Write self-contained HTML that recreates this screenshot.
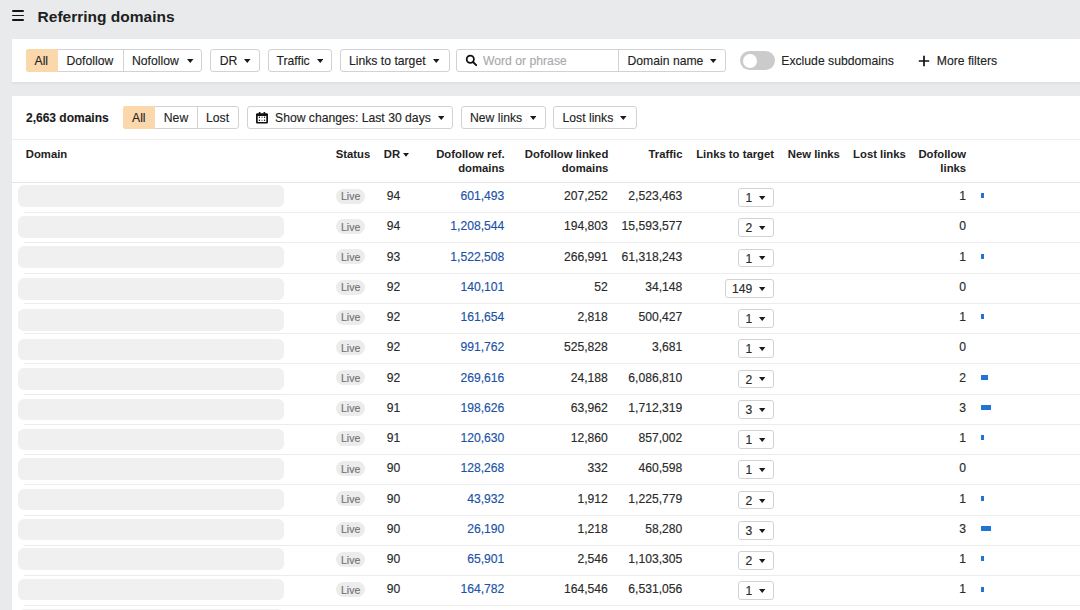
<!DOCTYPE html><html><head><meta charset="utf-8"><style>
*{box-sizing:border-box;margin:0;padding:0}
html,body{width:1080px;height:610px;overflow:hidden;background:#e9eaec;font-family:"Liberation Sans", sans-serif;color:#222}
.a{position:absolute;white-space:nowrap}
.btn{position:absolute;border:1px solid #d2d2d4;background:#fff;border-radius:3px;font-size:12.2px;color:#222}
.t{position:absolute;white-space:nowrap;line-height:1;-webkit-text-stroke:0.12px currentColor}
.panel{position:absolute;left:12px;right:0;background:#fff}
.h{font-weight:bold;font-size:11.3px;color:#222;line-height:13.4px;-webkit-text-stroke:0}
.r{text-align:right}
.num{font-size:12.15px;color:#2a2a2a;-webkit-text-stroke:0.15px currentColor}
.lnk{color:#1a52a6}
.line{position:absolute;left:12px;right:0;height:1px;background:#ececec}
</style></head><body><div class="a" style="left:12px;top:10.3px;width:12px;height:1.8px;background:#141414;border-radius:1px"></div>
<div class="a" style="left:12px;top:14.6px;width:12px;height:1.8px;background:#141414;border-radius:1px"></div>
<div class="a" style="left:12px;top:19px;width:12px;height:1.8px;background:#141414;border-radius:1px"></div>
<div class="t" style="left:37.6px;top:8.7px;font-weight:bold;font-size:15.5px;color:#202020;-webkit-text-stroke:0">Referring domains</div>
<div class="panel" style="top:39px;height:44px;border-bottom:1px solid #dedfe1;box-shadow:0 1px 1.5px rgba(0,0,0,0.035)"></div>
<div class="btn" style="left:26px;top:49px;width:176.4px;height:22.5px"></div>
<div class="a" style="left:26px;top:49px;width:31.5px;height:22.5px;background:#fad8ab;border-radius:3px 0 0 3px"></div>
<div class="a" style="left:123px;top:49px;width:1px;height:22.5px;background:#d2d2d4"></div>
<div class="t" style="left:34.5px;top:55.1px;font-size:12.2px">All</div>
<div class="t" style="left:66.5px;top:55.1px;font-size:12.2px">Dofollow</div>
<div class="t" style="left:132px;top:55.1px;font-size:12.2px">Nofollow</div>
<svg style="position:absolute;left:187px;top:58.800000000000004px" width="6.5" height="4" viewBox="0 0 6.5 4"><path d="M0 0H6.5L3.25 4Z" fill="#1a1a1a"/></svg>
<div class="btn" style="left:210.4px;top:49px;width:49.400000000000006px;height:22.5px;background:#fff"></div><div class="t" style="left:219.8px;top:55.1px;font-size:12.2px;color:#222">DR</div><svg style="position:absolute;left:244.0px;top:58.800000000000004px" width="6.5" height="4" viewBox="0 0 6.5 4"><path d="M0 0H6.5L3.25 4Z" fill="#1a1a1a"/></svg>
<div class="btn" style="left:267.5px;top:49px;width:64.89999999999998px;height:22.5px;background:#fff"></div><div class="t" style="left:276.5px;top:55.1px;font-size:12.2px;color:#222">Traffic</div><svg style="position:absolute;left:316.8px;top:58.800000000000004px" width="6.5" height="4" viewBox="0 0 6.5 4"><path d="M0 0H6.5L3.25 4Z" fill="#1a1a1a"/></svg>
<div class="btn" style="left:340px;top:49px;width:109.80000000000001px;height:22.5px;background:#fff"></div><div class="t" style="left:349px;top:55.1px;font-size:12.2px;color:#222">Links to target</div><svg style="position:absolute;left:433px;top:58.800000000000004px" width="6.5" height="4" viewBox="0 0 6.5 4"><path d="M0 0H6.5L3.25 4Z" fill="#1a1a1a"/></svg>
<div class="btn" style="left:456.3px;top:49px;width:270.09999999999997px;height:22.5px"></div>
<div class="a" style="left:618px;top:49px;width:1px;height:22.5px;background:#d2d2d4"></div>
<svg class="a" style="left:464px;top:53px" width="14" height="14" viewBox="0 0 14 14"><circle cx="6.3" cy="6.3" r="3.6" fill="none" stroke="#111" stroke-width="1.8"/><path d="M9 9L12.2 12.2" stroke="#111" stroke-width="1.9" stroke-linecap="round"/></svg>
<div class="t" style="left:483px;top:55.1px;font-size:12.2px;color:#a9a9a9">Word or phrase</div>
<div class="t" style="left:627.5px;top:55.1px;font-size:12.2px">Domain name</div>
<svg style="position:absolute;left:710.2px;top:58.800000000000004px" width="6.5" height="4" viewBox="0 0 6.5 4"><path d="M0 0H6.5L3.25 4Z" fill="#1a1a1a"/></svg>
<div class="a" style="left:740.4px;top:50.9px;width:34.3px;height:18.9px;border-radius:10px;background:#cbcbcb"></div>
<div class="a" style="left:742.5px;top:53.6px;width:14px;height:14px;border-radius:50%;background:#fff"></div>
<div class="t" style="left:781.3px;top:55.1px;font-size:12.2px">Exclude subdomains</div>
<svg class="a" style="left:918px;top:54.5px" width="12" height="12" viewBox="0 0 12 12"><path d="M6 0.8V11.2M0.8 6H11.2" stroke="#111" stroke-width="1.7"/></svg>
<div class="t" style="left:936.8px;top:55.1px;font-size:12.2px">More filters</div>
<div class="panel" style="top:96px;bottom:0"></div>
<div class="t" style="left:26px;top:112.39999999999999px;font-weight:bold;font-size:12px;color:#1a1a1a">2,663 domains</div>
<div class="btn" style="left:123.1px;top:106px;width:115.6px;height:22.5px"></div>
<div class="a" style="left:123.1px;top:106px;width:31.5px;height:22.5px;background:#fad8ab;border-radius:3px 0 0 3px"></div>
<div class="a" style="left:197px;top:106px;width:1px;height:22.5px;background:#d2d2d4"></div>
<div class="t" style="left:132px;top:112.1px;font-size:12.2px">All</div>
<div class="t" style="left:163.8px;top:112.1px;font-size:12.2px">New</div>
<div class="t" style="left:206px;top:112.1px;font-size:12.2px">Lost</div>
<div class="btn" style="left:246.7px;top:106px;width:206.40000000000003px;height:22.5px"></div>
<svg class="a" style="left:256px;top:111.5px" width="12" height="12" viewBox="0 0 12 12"><path fill-rule="evenodd" fill="#111" d="M1.2 1.2H10.8Q12 1.2 12 2.4V10.3Q12 11.5 10.8 11.5H1.2Q0 11.5 0 10.3V2.4Q0 1.2 1.2 1.2ZM1.7 4V9.9H10.3V4Z"/><rect x="2.8" y="0" width="1.7" height="2" rx="0.6" fill="#111"/><rect x="7.5" y="0" width="1.7" height="2" rx="0.6" fill="#111"/><circle cx="3.4" cy="5.3" r="0.7" fill="#111"/><circle cx="8.6" cy="5.3" r="0.7" fill="#111"/><circle cx="3.4" cy="8.3" r="0.7" fill="#111"/><circle cx="8.6" cy="8.3" r="0.7" fill="#111"/><rect x="5.2" y="4.7" width="1.6" height="1.1" fill="#888"/><rect x="5.2" y="7.8" width="1.6" height="1.1" fill="#888"/></svg>
<div class="t" style="left:275px;top:112.1px;font-size:12.2px">Show changes: Last 30 days</div>
<svg style="position:absolute;left:437.8px;top:115.8px" width="6.5" height="4" viewBox="0 0 6.5 4"><path d="M0 0H6.5L3.25 4Z" fill="#1a1a1a"/></svg>
<div class="btn" style="left:461.3px;top:106px;width:84.99999999999994px;height:22.5px;background:#fff"></div><div class="t" style="left:470px;top:112.1px;font-size:12.2px;color:#222">New links</div><svg style="position:absolute;left:529.5px;top:115.8px" width="6.5" height="4" viewBox="0 0 6.5 4"><path d="M0 0H6.5L3.25 4Z" fill="#1a1a1a"/></svg>
<div class="btn" style="left:553.3px;top:106px;width:83.40000000000009px;height:22.5px;background:#fff"></div><div class="t" style="left:562.5px;top:112.1px;font-size:12.2px;color:#222">Lost links</div><svg style="position:absolute;left:620px;top:115.8px" width="6.5" height="4" viewBox="0 0 6.5 4"><path d="M0 0H6.5L3.25 4Z" fill="#1a1a1a"/></svg>
<div class="line" style="top:139px"></div>
<div class="t h" style="left:25.8px;top:148.3px">Domain</div>
<div class="t h" style="left:335.7px;top:148.3px">Status</div>
<div class="t h" style="left:383.8px;top:148.3px">DR</div>
<svg style="position:absolute;left:403.3px;top:153.3px" width="6" height="3.8" viewBox="0 0 6 3.8"><path d="M0 0H6L3.0 3.8Z" fill="#1a1a1a"/></svg>
<div class="t h r" style="right:575.4px;top:148.3px">Dofollow ref.<br>domains</div>
<div class="t h r" style="right:471.70000000000005px;top:148.3px">Dofollow linked<br>domains</div>
<div class="t h r" style="right:397.5px;top:148.3px">Traffic</div>
<div class="t h" style="left:696.2px;top:148.3px">Links to target</div>
<div class="t h" style="left:787.8px;top:148.3px">New links</div>
<div class="t h" style="left:853.1px;top:148.3px">Lost links</div>
<div class="t h r" style="right:113.89999999999998px;top:148.3px">Dofollow<br>links</div>
<div class="line" style="top:181.8px;background:#e6e6e6"></div>
<div class="a" style="left:18.4px;top:184.9px;width:265.4px;height:21.8px;border-radius:6px;background:#f0f0f0"></div>
<div class="line" style="top:212.06px;left:24px"></div>
<div class="a" style="left:336px;top:188.8px;width:28.7px;height:15px;border-radius:8px;background:#ececec"></div>
<div class="t" style="left:341px;top:191.4px;font-size:10.5px;color:#727272;-webkit-text-stroke:0.15px currentColor">Live</div>
<div class="t num" style="left:386.7px;top:190.10000000000002px">94</div>
<div class="t num lnk r" style="right:575.7px;top:190.10000000000002px">601,493</div>
<div class="t num r" style="right:472.20000000000005px;top:190.10000000000002px">207,252</div>
<div class="t num r" style="right:397.70000000000005px;top:190.10000000000002px">2,523,463</div>
<div class="btn" style="left:737.8299999999999px;top:188.0px;width:35.97px;height:18.8px"></div>
<div class="t num" style="left:745.43px;top:192.0px">1</div>
<svg style="position:absolute;left:759.2999999999998px;top:195.9px" width="6.4" height="4" viewBox="0 0 6.4 4"><path d="M0 0H6.4L3.2 4Z" fill="#1a1a1a"/></svg>
<div class="t num r" style="right:114px;top:190.10000000000002px">1</div>
<div class="a" style="left:980.5px;top:193.3px;width:3.5px;height:5px;background:#1f74d6"></div>
<div class="a" style="left:18.4px;top:215.9px;width:265.4px;height:21.8px;border-radius:6px;background:#f0f0f0"></div>
<div class="line" style="top:242.32px;left:24px"></div>
<div class="a" style="left:336px;top:219.06px;width:28.7px;height:15px;border-radius:8px;background:#ececec"></div>
<div class="t" style="left:341px;top:221.66px;font-size:10.5px;color:#727272;-webkit-text-stroke:0.15px currentColor">Live</div>
<div class="t num" style="left:386.7px;top:220.36px">94</div>
<div class="t num lnk r" style="right:575.7px;top:220.36px">1,208,544</div>
<div class="t num r" style="right:472.20000000000005px;top:220.36px">194,803</div>
<div class="t num r" style="right:397.70000000000005px;top:220.36px">15,593,577</div>
<div class="btn" style="left:737.8299999999999px;top:218.26px;width:35.97px;height:18.8px"></div>
<div class="t num" style="left:745.43px;top:222.26px">2</div>
<svg style="position:absolute;left:759.2999999999998px;top:226.16px" width="6.4" height="4" viewBox="0 0 6.4 4"><path d="M0 0H6.4L3.2 4Z" fill="#1a1a1a"/></svg>
<div class="t num r" style="right:114px;top:220.36px">0</div>
<div class="a" style="left:18.4px;top:245.9px;width:265.4px;height:21.8px;border-radius:6px;background:#f0f0f0"></div>
<div class="line" style="top:272.58000000000004px;left:24px"></div>
<div class="a" style="left:336px;top:249.32000000000002px;width:28.7px;height:15px;border-radius:8px;background:#ececec"></div>
<div class="t" style="left:341px;top:251.92000000000002px;font-size:10.5px;color:#727272;-webkit-text-stroke:0.15px currentColor">Live</div>
<div class="t num" style="left:386.7px;top:250.62000000000003px">93</div>
<div class="t num lnk r" style="right:575.7px;top:250.62000000000003px">1,522,508</div>
<div class="t num r" style="right:472.20000000000005px;top:250.62000000000003px">266,991</div>
<div class="t num r" style="right:397.70000000000005px;top:250.62000000000003px">61,318,243</div>
<div class="btn" style="left:737.8299999999999px;top:248.52px;width:35.97px;height:18.8px"></div>
<div class="t num" style="left:745.43px;top:252.52px">1</div>
<svg style="position:absolute;left:759.2999999999998px;top:256.42px" width="6.4" height="4" viewBox="0 0 6.4 4"><path d="M0 0H6.4L3.2 4Z" fill="#1a1a1a"/></svg>
<div class="t num r" style="right:114px;top:250.62000000000003px">1</div>
<div class="a" style="left:980.5px;top:253.82000000000002px;width:3.5px;height:5px;background:#1f74d6"></div>
<div class="a" style="left:18.4px;top:277.8px;width:265.4px;height:21.8px;border-radius:6px;background:#f0f0f0"></div>
<div class="line" style="top:302.84000000000003px;left:24px"></div>
<div class="a" style="left:336px;top:279.58000000000004px;width:28.7px;height:15px;border-radius:8px;background:#ececec"></div>
<div class="t" style="left:341px;top:282.18000000000006px;font-size:10.5px;color:#727272;-webkit-text-stroke:0.15px currentColor">Live</div>
<div class="t num" style="left:386.7px;top:280.88000000000005px">92</div>
<div class="t num lnk r" style="right:575.7px;top:280.88000000000005px">140,101</div>
<div class="t num r" style="right:472.20000000000005px;top:280.88000000000005px">52</div>
<div class="t num r" style="right:397.70000000000005px;top:280.88000000000005px">34,148</div>
<div class="btn" style="left:724.5px;top:278.78000000000003px;width:49.3px;height:18.8px"></div>
<div class="t num" style="left:732.1px;top:282.78000000000003px">149</div>
<svg style="position:absolute;left:759.3px;top:286.68000000000006px" width="6.4" height="4" viewBox="0 0 6.4 4"><path d="M0 0H6.4L3.2 4Z" fill="#1a1a1a"/></svg>
<div class="t num r" style="right:114px;top:280.88000000000005px">0</div>
<div class="a" style="left:18.4px;top:308.8px;width:265.4px;height:21.8px;border-radius:6px;background:#f0f0f0"></div>
<div class="line" style="top:333.1px;left:24px"></div>
<div class="a" style="left:336px;top:309.84000000000003px;width:28.7px;height:15px;border-radius:8px;background:#ececec"></div>
<div class="t" style="left:341px;top:312.44000000000005px;font-size:10.5px;color:#727272;-webkit-text-stroke:0.15px currentColor">Live</div>
<div class="t num" style="left:386.7px;top:311.14000000000004px">92</div>
<div class="t num lnk r" style="right:575.7px;top:311.14000000000004px">161,654</div>
<div class="t num r" style="right:472.20000000000005px;top:311.14000000000004px">2,818</div>
<div class="t num r" style="right:397.70000000000005px;top:311.14000000000004px">500,427</div>
<div class="btn" style="left:737.8299999999999px;top:309.04px;width:35.97px;height:18.8px"></div>
<div class="t num" style="left:745.43px;top:313.04px">1</div>
<svg style="position:absolute;left:759.2999999999998px;top:316.94000000000005px" width="6.4" height="4" viewBox="0 0 6.4 4"><path d="M0 0H6.4L3.2 4Z" fill="#1a1a1a"/></svg>
<div class="t num r" style="right:114px;top:311.14000000000004px">1</div>
<div class="a" style="left:980.5px;top:314.34000000000003px;width:3.5px;height:5px;background:#1f74d6"></div>
<div class="a" style="left:18.4px;top:338.5px;width:265.4px;height:21.8px;border-radius:6px;background:#f0f0f0"></div>
<div class="line" style="top:363.36px;left:24px"></div>
<div class="a" style="left:336px;top:340.1px;width:28.7px;height:15px;border-radius:8px;background:#ececec"></div>
<div class="t" style="left:341px;top:342.70000000000005px;font-size:10.5px;color:#727272;-webkit-text-stroke:0.15px currentColor">Live</div>
<div class="t num" style="left:386.7px;top:341.40000000000003px">92</div>
<div class="t num lnk r" style="right:575.7px;top:341.40000000000003px">991,762</div>
<div class="t num r" style="right:472.20000000000005px;top:341.40000000000003px">525,828</div>
<div class="t num r" style="right:397.70000000000005px;top:341.40000000000003px">3,681</div>
<div class="btn" style="left:737.8299999999999px;top:339.3px;width:35.97px;height:18.8px"></div>
<div class="t num" style="left:745.43px;top:343.3px">1</div>
<svg style="position:absolute;left:759.2999999999998px;top:347.20000000000005px" width="6.4" height="4" viewBox="0 0 6.4 4"><path d="M0 0H6.4L3.2 4Z" fill="#1a1a1a"/></svg>
<div class="t num r" style="right:114px;top:341.40000000000003px">0</div>
<div class="a" style="left:18.4px;top:367.9px;width:265.4px;height:21.8px;border-radius:6px;background:#f0f0f0"></div>
<div class="line" style="top:393.62px;left:24px"></div>
<div class="a" style="left:336px;top:370.36px;width:28.7px;height:15px;border-radius:8px;background:#ececec"></div>
<div class="t" style="left:341px;top:372.96000000000004px;font-size:10.5px;color:#727272;-webkit-text-stroke:0.15px currentColor">Live</div>
<div class="t num" style="left:386.7px;top:371.66px">92</div>
<div class="t num lnk r" style="right:575.7px;top:371.66px">269,616</div>
<div class="t num r" style="right:472.20000000000005px;top:371.66px">24,188</div>
<div class="t num r" style="right:397.70000000000005px;top:371.66px">6,086,810</div>
<div class="btn" style="left:737.8299999999999px;top:369.56px;width:35.97px;height:18.8px"></div>
<div class="t num" style="left:745.43px;top:373.56px">2</div>
<svg style="position:absolute;left:759.2999999999998px;top:377.46000000000004px" width="6.4" height="4" viewBox="0 0 6.4 4"><path d="M0 0H6.4L3.2 4Z" fill="#1a1a1a"/></svg>
<div class="t num r" style="right:114px;top:371.66px">2</div>
<div class="a" style="left:980.5px;top:374.86px;width:7.0px;height:5px;background:#1f74d6"></div>
<div class="a" style="left:18.4px;top:398.5px;width:265.4px;height:21.8px;border-radius:6px;background:#f0f0f0"></div>
<div class="line" style="top:423.88px;left:24px"></div>
<div class="a" style="left:336px;top:400.62px;width:28.7px;height:15px;border-radius:8px;background:#ececec"></div>
<div class="t" style="left:341px;top:403.22px;font-size:10.5px;color:#727272;-webkit-text-stroke:0.15px currentColor">Live</div>
<div class="t num" style="left:386.7px;top:401.92px">91</div>
<div class="t num lnk r" style="right:575.7px;top:401.92px">198,626</div>
<div class="t num r" style="right:472.20000000000005px;top:401.92px">63,962</div>
<div class="t num r" style="right:397.70000000000005px;top:401.92px">1,712,319</div>
<div class="btn" style="left:737.8299999999999px;top:399.82px;width:35.97px;height:18.8px"></div>
<div class="t num" style="left:745.43px;top:403.82px">3</div>
<svg style="position:absolute;left:759.2999999999998px;top:407.72px" width="6.4" height="4" viewBox="0 0 6.4 4"><path d="M0 0H6.4L3.2 4Z" fill="#1a1a1a"/></svg>
<div class="t num r" style="right:114px;top:401.92px">3</div>
<div class="a" style="left:980.5px;top:405.12px;width:10.5px;height:5px;background:#1f74d6"></div>
<div class="a" style="left:18.4px;top:428.5px;width:265.4px;height:21.8px;border-radius:6px;background:#f0f0f0"></div>
<div class="line" style="top:454.14px;left:24px"></div>
<div class="a" style="left:336px;top:430.88px;width:28.7px;height:15px;border-radius:8px;background:#ececec"></div>
<div class="t" style="left:341px;top:433.48px;font-size:10.5px;color:#727272;-webkit-text-stroke:0.15px currentColor">Live</div>
<div class="t num" style="left:386.7px;top:432.18px">91</div>
<div class="t num lnk r" style="right:575.7px;top:432.18px">120,630</div>
<div class="t num r" style="right:472.20000000000005px;top:432.18px">12,860</div>
<div class="t num r" style="right:397.70000000000005px;top:432.18px">857,002</div>
<div class="btn" style="left:737.8299999999999px;top:430.08px;width:35.97px;height:18.8px"></div>
<div class="t num" style="left:745.43px;top:434.08px">1</div>
<svg style="position:absolute;left:759.2999999999998px;top:437.98px" width="6.4" height="4" viewBox="0 0 6.4 4"><path d="M0 0H6.4L3.2 4Z" fill="#1a1a1a"/></svg>
<div class="t num r" style="right:114px;top:432.18px">1</div>
<div class="a" style="left:980.5px;top:435.38px;width:3.5px;height:5px;background:#1f74d6"></div>
<div class="a" style="left:18.4px;top:457.9px;width:265.4px;height:21.8px;border-radius:6px;background:#f0f0f0"></div>
<div class="line" style="top:484.40000000000003px;left:24px"></div>
<div class="a" style="left:336px;top:461.14000000000004px;width:28.7px;height:15px;border-radius:8px;background:#ececec"></div>
<div class="t" style="left:341px;top:463.74000000000007px;font-size:10.5px;color:#727272;-webkit-text-stroke:0.15px currentColor">Live</div>
<div class="t num" style="left:386.7px;top:462.44000000000005px">90</div>
<div class="t num lnk r" style="right:575.7px;top:462.44000000000005px">128,268</div>
<div class="t num r" style="right:472.20000000000005px;top:462.44000000000005px">332</div>
<div class="t num r" style="right:397.70000000000005px;top:462.44000000000005px">460,598</div>
<div class="btn" style="left:737.8299999999999px;top:460.34000000000003px;width:35.97px;height:18.8px"></div>
<div class="t num" style="left:745.43px;top:464.34000000000003px">1</div>
<svg style="position:absolute;left:759.2999999999998px;top:468.24000000000007px" width="6.4" height="4" viewBox="0 0 6.4 4"><path d="M0 0H6.4L3.2 4Z" fill="#1a1a1a"/></svg>
<div class="t num r" style="right:114px;top:462.44000000000005px">0</div>
<div class="a" style="left:18.4px;top:488.5px;width:265.4px;height:21.8px;border-radius:6px;background:#f0f0f0"></div>
<div class="line" style="top:514.6600000000001px;left:24px"></div>
<div class="a" style="left:336px;top:491.40000000000003px;width:28.7px;height:15px;border-radius:8px;background:#ececec"></div>
<div class="t" style="left:341px;top:494.00000000000006px;font-size:10.5px;color:#727272;-webkit-text-stroke:0.15px currentColor">Live</div>
<div class="t num" style="left:386.7px;top:492.70000000000005px">90</div>
<div class="t num lnk r" style="right:575.7px;top:492.70000000000005px">43,932</div>
<div class="t num r" style="right:472.20000000000005px;top:492.70000000000005px">1,912</div>
<div class="t num r" style="right:397.70000000000005px;top:492.70000000000005px">1,225,779</div>
<div class="btn" style="left:737.8299999999999px;top:490.6px;width:35.97px;height:18.8px"></div>
<div class="t num" style="left:745.43px;top:494.6px">2</div>
<svg style="position:absolute;left:759.2999999999998px;top:498.50000000000006px" width="6.4" height="4" viewBox="0 0 6.4 4"><path d="M0 0H6.4L3.2 4Z" fill="#1a1a1a"/></svg>
<div class="t num r" style="right:114px;top:492.70000000000005px">1</div>
<div class="a" style="left:980.5px;top:495.90000000000003px;width:3.5px;height:5px;background:#1f74d6"></div>
<div class="a" style="left:18.4px;top:518.5px;width:265.4px;height:21.8px;border-radius:6px;background:#f0f0f0"></div>
<div class="line" style="top:544.9200000000001px;left:24px"></div>
<div class="a" style="left:336px;top:521.6600000000001px;width:28.7px;height:15px;border-radius:8px;background:#ececec"></div>
<div class="t" style="left:341px;top:524.2600000000001px;font-size:10.5px;color:#727272;-webkit-text-stroke:0.15px currentColor">Live</div>
<div class="t num" style="left:386.7px;top:522.96px">90</div>
<div class="t num lnk r" style="right:575.7px;top:522.96px">26,190</div>
<div class="t num r" style="right:472.20000000000005px;top:522.96px">1,218</div>
<div class="t num r" style="right:397.70000000000005px;top:522.96px">58,280</div>
<div class="btn" style="left:737.8299999999999px;top:520.8600000000001px;width:35.97px;height:18.8px"></div>
<div class="t num" style="left:745.43px;top:524.8600000000001px">3</div>
<svg style="position:absolute;left:759.2999999999998px;top:528.7600000000001px" width="6.4" height="4" viewBox="0 0 6.4 4"><path d="M0 0H6.4L3.2 4Z" fill="#1a1a1a"/></svg>
<div class="t num r" style="right:114px;top:522.96px">3</div>
<div class="a" style="left:980.5px;top:526.1600000000001px;width:10.5px;height:5px;background:#1f74d6"></div>
<div class="a" style="left:18.4px;top:547.9px;width:265.4px;height:21.8px;border-radius:6px;background:#f0f0f0"></div>
<div class="line" style="top:575.1800000000001px;left:24px"></div>
<div class="a" style="left:336px;top:551.9200000000001px;width:28.7px;height:15px;border-radius:8px;background:#ececec"></div>
<div class="t" style="left:341px;top:554.5200000000001px;font-size:10.5px;color:#727272;-webkit-text-stroke:0.15px currentColor">Live</div>
<div class="t num" style="left:386.7px;top:553.22px">90</div>
<div class="t num lnk r" style="right:575.7px;top:553.22px">65,901</div>
<div class="t num r" style="right:472.20000000000005px;top:553.22px">2,546</div>
<div class="t num r" style="right:397.70000000000005px;top:553.22px">1,103,305</div>
<div class="btn" style="left:737.8299999999999px;top:551.1200000000001px;width:35.97px;height:18.8px"></div>
<div class="t num" style="left:745.43px;top:555.1200000000001px">2</div>
<svg style="position:absolute;left:759.2999999999998px;top:559.0200000000001px" width="6.4" height="4" viewBox="0 0 6.4 4"><path d="M0 0H6.4L3.2 4Z" fill="#1a1a1a"/></svg>
<div class="t num r" style="right:114px;top:553.22px">1</div>
<div class="a" style="left:980.5px;top:556.4200000000001px;width:3.5px;height:5px;background:#1f74d6"></div>
<div class="a" style="left:18.4px;top:578.5px;width:265.4px;height:21.8px;border-radius:6px;background:#f0f0f0"></div>
<div class="line" style="top:605.44px;left:24px"></div>
<div class="a" style="left:336px;top:582.1800000000001px;width:28.7px;height:15px;border-radius:8px;background:#ececec"></div>
<div class="t" style="left:341px;top:584.7800000000001px;font-size:10.5px;color:#727272;-webkit-text-stroke:0.15px currentColor">Live</div>
<div class="t num" style="left:386.7px;top:583.48px">90</div>
<div class="t num lnk r" style="right:575.7px;top:583.48px">164,782</div>
<div class="t num r" style="right:472.20000000000005px;top:583.48px">164,546</div>
<div class="t num r" style="right:397.70000000000005px;top:583.48px">6,531,056</div>
<div class="btn" style="left:737.8299999999999px;top:581.3800000000001px;width:35.97px;height:18.8px"></div>
<div class="t num" style="left:745.43px;top:585.3800000000001px">1</div>
<svg style="position:absolute;left:759.2999999999998px;top:589.2800000000001px" width="6.4" height="4" viewBox="0 0 6.4 4"><path d="M0 0H6.4L3.2 4Z" fill="#1a1a1a"/></svg>
<div class="t num r" style="right:114px;top:583.48px">1</div>
<div class="a" style="left:980.5px;top:586.6800000000001px;width:3.5px;height:5px;background:#1f74d6"></div>
<div class="a" style="left:18.4px;top:608.6px;width:265.4px;height:21.8px;border-radius:6px;background:#f0f0f0"></div>
<div class="line" style="top:635.7px;left:24px"></div></body></html>
